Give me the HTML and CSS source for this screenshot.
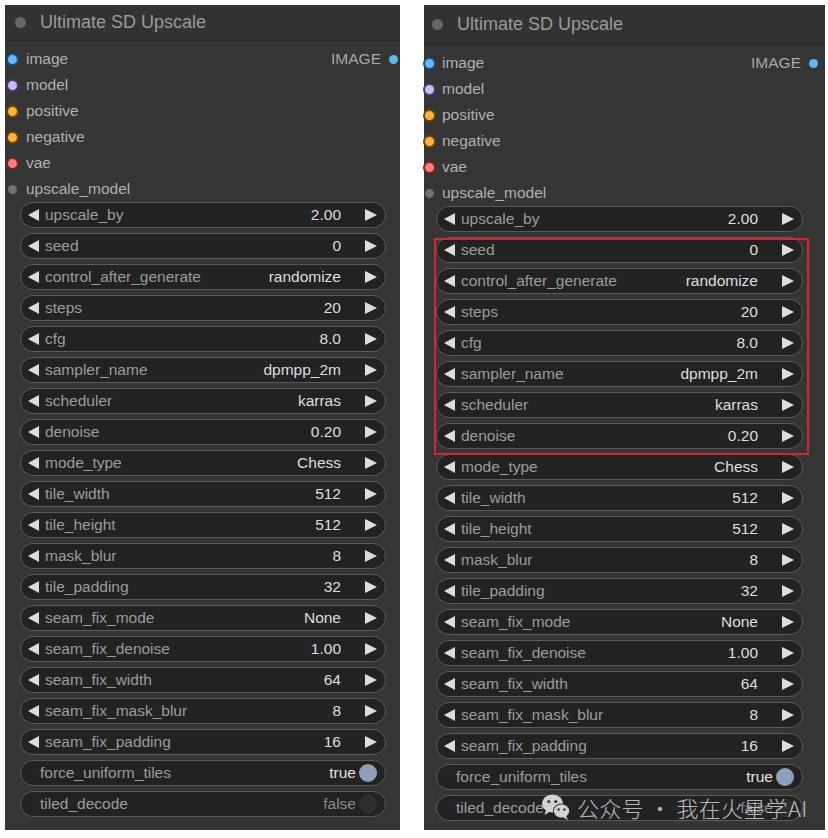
FILE: index.html
```html
<!DOCTYPE html>
<html>
<head>
<meta charset="utf-8">
<link rel="stylesheet" href="styles.css">
</head>
<body>
<div class="panel left">
  <div class="title"><span class="tdot"></span><span class="ttext">Ultimate SD Upscale</span></div>
  <div class="body">
    <div class="slot"><span class="sd c-img"></span><span class="sn">image</span><span class="out">IMAGE</span><span class="od"></span></div>
    <div class="slot"><span class="sd c-model"></span><span class="sn">model</span></div>
    <div class="slot"><span class="sd c-cond"></span><span class="sn">positive</span></div>
    <div class="slot"><span class="sd c-cond"></span><span class="sn">negative</span></div>
    <div class="slot"><span class="sd c-vae"></span><span class="sn">vae</span></div>
    <div class="slot"><span class="sd c-up"></span><span class="sn">upscale_model</span></div>
    <div class="widgets">
      <div class="w"><span class="al"></span><span class="lbl">upscale_by</span><span class="val">2.00</span><span class="ar"></span></div>
      <div class="w"><span class="al"></span><span class="lbl">seed</span><span class="val">0</span><span class="ar"></span></div>
      <div class="w"><span class="al"></span><span class="lbl">control_after_generate</span><span class="val">randomize</span><span class="ar"></span></div>
      <div class="w"><span class="al"></span><span class="lbl">steps</span><span class="val">20</span><span class="ar"></span></div>
      <div class="w"><span class="al"></span><span class="lbl">cfg</span><span class="val">8.0</span><span class="ar"></span></div>
      <div class="w"><span class="al"></span><span class="lbl">sampler_name</span><span class="val">dpmpp_2m</span><span class="ar"></span></div>
      <div class="w"><span class="al"></span><span class="lbl">scheduler</span><span class="val">karras</span><span class="ar"></span></div>
      <div class="w"><span class="al"></span><span class="lbl">denoise</span><span class="val">0.20</span><span class="ar"></span></div>
      <div class="w"><span class="al"></span><span class="lbl">mode_type</span><span class="val">Chess</span><span class="ar"></span></div>
      <div class="w"><span class="al"></span><span class="lbl">tile_width</span><span class="val">512</span><span class="ar"></span></div>
      <div class="w"><span class="al"></span><span class="lbl">tile_height</span><span class="val">512</span><span class="ar"></span></div>
      <div class="w"><span class="al"></span><span class="lbl">mask_blur</span><span class="val">8</span><span class="ar"></span></div>
      <div class="w"><span class="al"></span><span class="lbl">tile_padding</span><span class="val">32</span><span class="ar"></span></div>
      <div class="w"><span class="al"></span><span class="lbl">seam_fix_mode</span><span class="val">None</span><span class="ar"></span></div>
      <div class="w"><span class="al"></span><span class="lbl">seam_fix_denoise</span><span class="val">1.00</span><span class="ar"></span></div>
      <div class="w"><span class="al"></span><span class="lbl">seam_fix_width</span><span class="val">64</span><span class="ar"></span></div>
      <div class="w"><span class="al"></span><span class="lbl">seam_fix_mask_blur</span><span class="val">8</span><span class="ar"></span></div>
      <div class="w"><span class="al"></span><span class="lbl">seam_fix_padding</span><span class="val">16</span><span class="ar"></span></div>
      <div class="w tg"><span class="lbl">force_uniform_tiles</span><span class="tv on">true</span><span class="knob on"></span></div>
      <div class="w tg"><span class="lbl">tiled_decode</span><span class="tv">false</span><span class="knob"></span></div>
    </div>
  </div>
</div>

<div class="panel right">
  <div class="title"><span class="tdot"></span><span class="ttext">Ultimate SD Upscale</span></div>
  <div class="body">
    <div class="slot"><span class="sd c-img"></span><span class="sn">image</span><span class="out">IMAGE</span><span class="od"></span></div>
    <div class="slot"><span class="sd c-model"></span><span class="sn">model</span></div>
    <div class="slot"><span class="sd c-cond"></span><span class="sn">positive</span></div>
    <div class="slot"><span class="sd c-cond"></span><span class="sn">negative</span></div>
    <div class="slot"><span class="sd c-vae"></span><span class="sn">vae</span></div>
    <div class="slot"><span class="sd c-up"></span><span class="sn">upscale_model</span></div>
    <div class="widgets">
      <div class="w"><span class="al"></span><span class="lbl">upscale_by</span><span class="val">2.00</span><span class="ar"></span></div>
      <div class="w"><span class="al"></span><span class="lbl">seed</span><span class="val">0</span><span class="ar"></span></div>
      <div class="w"><span class="al"></span><span class="lbl">control_after_generate</span><span class="val">randomize</span><span class="ar"></span></div>
      <div class="w"><span class="al"></span><span class="lbl">steps</span><span class="val">20</span><span class="ar"></span></div>
      <div class="w"><span class="al"></span><span class="lbl">cfg</span><span class="val">8.0</span><span class="ar"></span></div>
      <div class="w"><span class="al"></span><span class="lbl">sampler_name</span><span class="val">dpmpp_2m</span><span class="ar"></span></div>
      <div class="w"><span class="al"></span><span class="lbl">scheduler</span><span class="val">karras</span><span class="ar"></span></div>
      <div class="w"><span class="al"></span><span class="lbl">denoise</span><span class="val">0.20</span><span class="ar"></span></div>
      <div class="w"><span class="al"></span><span class="lbl">mode_type</span><span class="val">Chess</span><span class="ar"></span></div>
      <div class="w"><span class="al"></span><span class="lbl">tile_width</span><span class="val">512</span><span class="ar"></span></div>
      <div class="w"><span class="al"></span><span class="lbl">tile_height</span><span class="val">512</span><span class="ar"></span></div>
      <div class="w"><span class="al"></span><span class="lbl">mask_blur</span><span class="val">8</span><span class="ar"></span></div>
      <div class="w"><span class="al"></span><span class="lbl">tile_padding</span><span class="val">32</span><span class="ar"></span></div>
      <div class="w"><span class="al"></span><span class="lbl">seam_fix_mode</span><span class="val">None</span><span class="ar"></span></div>
      <div class="w"><span class="al"></span><span class="lbl">seam_fix_denoise</span><span class="val">1.00</span><span class="ar"></span></div>
      <div class="w"><span class="al"></span><span class="lbl">seam_fix_width</span><span class="val">64</span><span class="ar"></span></div>
      <div class="w"><span class="al"></span><span class="lbl">seam_fix_mask_blur</span><span class="val">8</span><span class="ar"></span></div>
      <div class="w"><span class="al"></span><span class="lbl">seam_fix_padding</span><span class="val">16</span><span class="ar"></span></div>
      <div class="w tg"><span class="lbl">force_uniform_tiles</span><span class="tv on">true</span><span class="knob on"></span></div>
      <div class="w tg"><span class="lbl">tiled_decode</span><span class="tv">false</span><span class="knob"></span></div>
    </div>
  </div>
  <div class="highlight"></div>
  <div class="watermark">
    <svg class="wx" viewBox="0 0 30 28" width="30" height="28">
      <ellipse cx="11.5" cy="10.5" rx="10.5" ry="9" fill="#d4d4d4"/>
      <path d="M5 17 L3.5 22 L9 18.5 Z" fill="#d4d4d4"/>
      <circle cx="7.8" cy="8.5" r="1.6" fill="#3a3a3a"/>
      <circle cx="14.8" cy="8.5" r="1.6" fill="#3a3a3a"/>
      <ellipse cx="20.5" cy="18" rx="8.6" ry="7.4" fill="#3a3a3a"/>
      <ellipse cx="20.5" cy="18" rx="7.6" ry="6.5" fill="#d4d4d4"/>
      <path d="M25 23 L27 27 L22 24.3 Z" fill="#d4d4d4"/>
      <circle cx="17.6" cy="16.5" r="1.3" fill="#3a3a3a"/>
      <circle cx="23.4" cy="16.5" r="1.3" fill="#3a3a3a"/>
    </svg>
    <span class="wt">公众号 · 我在火星学AI</span>
  </div>
</div>
</body>
</html>
```

FILE: styles.css
```css
html, body {
  margin: 0;
  padding: 0;
  background: #ffffff;
}
body {
  display: flex;
  align-items: flex-start;
  padding: 5px 0 0 5px;
  font-family: "Liberation Sans", Arial, sans-serif;
}
.panel {
  position: relative;
  background: #353535;
  height: 825px;
  box-sizing: border-box;
}
.panel.left {
  width: 395px;
}
.panel.right {
  width: 401px;
  margin-left: 24px;
}

/* title */
.title {
  display: flex;
  align-items: center;
  height: 36px;
  background: #323232;
  border-bottom: 1px solid #2b2b2b;
  box-sizing: border-box;
}
.right .title {
  height: 40px;
}
.tdot {
  flex: none;
  width: 11px;
  height: 11px;
  border-radius: 50%;
  background: #666;
  margin-left: 10px;
}
.right .tdot {
  margin-left: 8px;
}
.ttext {
  margin-left: 14px;
  font-size: 18px;
  color: #9a9a9a;
}

.body {
  padding-top: 5px;
}

/* slots */
.slot {
  display: flex;
  align-items: center;
  height: 26px;
  font-size: 15.5px;
  color: #b0b0b0;
}
.sd {
  display: block;
  flex: 0 0 13px;
  box-sizing: border-box;
  width: 13px;
  height: 13px;
  min-width: 13px;
  border-radius: 50%;
  margin-left: 1px;
  border: 2px solid #222;
}
.right .sd {
  margin-left: -1px;
}
.sn {
  margin-left: 7px;
  flex: 1;
}
.right .sn {
  margin-left: 6px;
}
.c-img { background: #66baf7; border-color: #1b4f78; }
.c-model { background: #cdbbef; border-color: #4a3b6e; }
.c-cond { background: #ffb33d; border-color: #6e4604; }
.c-vae { background: #ff7d7d; border-color: #7d2222; }
.sd.c-up { background: #6f6f75; border: none; flex-basis: 9px; width: 9px; min-width: 9px; height: 9px; margin-left: 3px; margin-right: 2px; }
.right .sd.c-up { margin-left: 1px; }
.out {
  flex: none;
  color: #a8a8a8;
  margin-right: 8px;
}
.od {
  display: block;
  flex: 0 0 9px;
  width: 9px;
  height: 9px;
  border-radius: 50%;
  background: #5fb6f5;
  margin-right: 2px;
}
.right .od {
  margin-right: 7px;
}

/* widgets */
.widgets {
  margin: 0 14px 0 15px;
}
.right .widgets {
  margin: 0 22px 0 12px;
}
.w {
  display: flex;
  align-items: center;
  height: 26px;
  box-sizing: border-box;
  border: 1px solid #5a5a5a;
  border-radius: 13px;
  background: #222222;
  margin-bottom: 5px;
  padding: 0 8px 0 7px;
  font-size: 15.5px;
}
.al {
  flex: none;
  width: 0;
  height: 0;
  border-top: 6px solid transparent;
  border-bottom: 6px solid transparent;
  border-right: 11px solid #dddddd;
}
.ar {
  flex: none;
  width: 0;
  height: 0;
  border-top: 6px solid transparent;
  border-bottom: 6px solid transparent;
  border-left: 12px solid #dddddd;
}
.lbl {
  flex: 1;
  margin-left: 6px;
  color: #9c9c9c;
  white-space: nowrap;
}
.val {
  color: #dedede;
  margin-right: 24px;
}
.tg {
  padding: 0 8px 0 19px;
}
.tg .lbl {
  margin-left: 0;
}
.tv {
  color: #8a8a8a;
  margin-right: 3px;
}
.tv.on {
  color: #e2e2e2;
}
.knob {
  flex: none;
  width: 18px;
  height: 18px;
  border-radius: 50%;
  background: #2e2e2e;
}
.knob.on {
  background: #8da2ba;
}

/* overlays */
.highlight {
  position: absolute;
  left: 10px;
  top: 233px;
  width: 375px;
  height: 217px;
  box-sizing: border-box;
  border: 2px solid #d42630;
}
.watermark {
  position: absolute;
  left: 117px;
  top: 786px;
  display: flex;
  align-items: center;
  gap: 6px;
}
.wt {
  font-family: "Noto Sans CJK SC", "Noto Sans", sans-serif;
  font-size: 22px;
  font-weight: 300;
  letter-spacing: 0.3px;
  color: rgba(225, 225, 225, 0.8);
  white-space: nowrap;
}
```
